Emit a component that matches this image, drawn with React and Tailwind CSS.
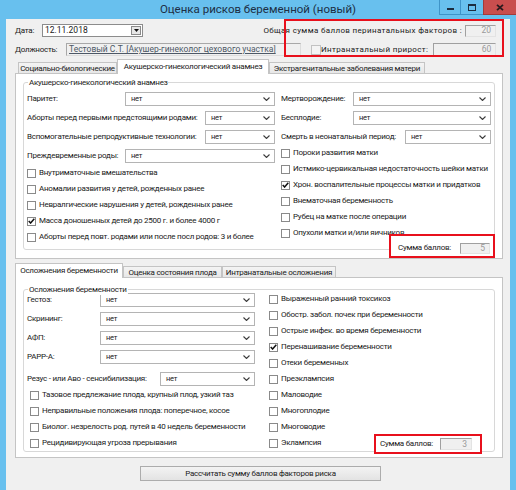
import React from "react";

const Chevron = () => (
  <svg width="7" height="4" viewBox="0 0 7 4" className="shrink-0">
    <path d="M0.5 0.5L3.5 3.5L6.5 0.5" fill="none" stroke="#3c3c3c" strokeWidth="1.1" />
  </svg>
);

function Select({ className = "" }) {
  return (
    <div className={`h-[14px] min-w-0 bg-white border border-[#b4b4b4] flex items-center justify-between pl-[5px] pr-[4px] ${className}`}>
      <span className="text-[7.5px] text-[#222] leading-none">нет</span>
      <Chevron />
    </div>
  );
}

function Check({ checked }) {
  return (
    <span className="w-[9px] h-[9px] border border-[#8a8a8a] bg-white shrink-0 flex items-center justify-center">
      {checked && (
        <svg width="7" height="6" viewBox="0 0 7 6">
          <path d="M0.7 3L2.6 5L6.3 0.7" fill="none" stroke="#111" strokeWidth="1.5" />
        </svg>
      )}
    </span>
  );
}

function CheckRow({ label, checked, pad = "" }) {
  return (
    <div className={`h-[16px] flex items-center gap-[3px] whitespace-nowrap ${pad}`}>
      <Check checked={checked} />
      <span>{label}</span>
    </div>
  );
}

function SelRow({ label, lw, h = "h-[19px]", extra = "" }) {
  return (
    <div className={`${h} flex items-center ${extra}`}>
      <span className={`${lw} shrink-0 whitespace-nowrap`}>{label}</span>
      <Select className="flex-1" />
    </div>
  );
}

function SunkenField({ value, w, h = "h-[12px]" }) {
  return (
    <div className={`${w} ${h} shrink-0 bg-[#f0f0f0] border border-[#a0a0a0] border-r-[#e3e3e3] border-b-[#e3e3e3] flex items-center justify-end pr-[4px] text-[#9a9a9a] text-[8.5px] tracking-normal`}>
      {value}
    </div>
  );
}

function Tab({ label, selected, w }) {
  return selected ? (
    <div className={`${w} h-[15px] shrink-0 bg-white border border-b-0 border-[#c4c4c4] relative z-10 flex items-center justify-center whitespace-nowrap`}>
      {label}
    </div>
  ) : (
    <div className={`${w} h-[12px] shrink-0 bg-gradient-to-b from-[#f4f4f4] to-[#e6e6e6] border border-b-0 border-[#c4c4c4] flex items-center justify-center whitespace-nowrap`}>
      {label}
    </div>
  );
}

function Legend({ children }) {
  return (
    <span className="absolute -top-[5px] left-[4px] bg-white px-[1px] leading-[10px] whitespace-nowrap">
      {children}
    </span>
  );
}

export default function App() {
  return (
    <div className="w-[516px] h-[490px] overflow-hidden bg-[#68c0ee] flex flex-col font-['Roboto',sans-serif] text-[8px] tracking-[-0.25px] leading-none text-[#1a1a1a]">
      {/* title bar */}
      <div className="h-[19px] shrink-0 grid grid-cols-[77px_1fr_77px]">
        <div />
        <div className="flex items-center justify-center text-[11.5px] tracking-normal text-[#1d2f45] pt-[1px]">
          Оценка рисков беременной (новый)
        </div>
        <div className="flex h-[15px] items-stretch">
          <div className="w-[21px] border-l border-b border-[#3f94c8] flex items-end justify-center pb-[4px]">
            <span className="w-[7px] h-[2px] bg-[#1c2d40]" />
          </div>
          <div className="w-[23px] border-l border-b border-[#3f94c8] flex items-center justify-center">
            <span className="w-[8px] h-[7px] border border-t-2 border-[#1c2d40]" />
          </div>
          <div className="w-[33px] bg-[#c94e4e] border-l border-b border-[#a33a3a] flex items-center justify-center">
            <svg width="8" height="7" viewBox="0 0 8 7">
              <path d="M1 0.8L7 6.2M7 0.8L1 6.2" stroke="#2a1a1e" strokeWidth="1.8" />
            </svg>
          </div>
        </div>
      </div>

      {/* content */}
      <div className="flex-1 mx-[6px] bg-[#f0f0f0] flex flex-col">
        {/* top fields */}
        <div className="relative pt-[5px] pl-[9px] pr-[14px]">
          <div className="h-[13px] flex items-center justify-between">
            <div className="flex items-center">
              <span className="w-[27px]">Дата:</span>
              <div className="w-[101px] h-[13px] bg-white border border-[#8c8c8c] flex items-center justify-between pl-[2px] pr-[1px] text-[8.5px] tracking-normal">
                <span>12.11.2018</span>
                <span className="w-[10px] h-[9px] bg-[#e6e6e6] border border-[#8a8a8a] flex items-center justify-center">
                  <svg width="5" height="3" viewBox="0 0 5 3">
                    <path d="M0 0H5L2.5 3Z" fill="#111" />
                  </svg>
                </span>
              </div>
            </div>
            <div className="flex items-center gap-[3px]">
              <span className="tracking-[0.35px] whitespace-nowrap">Общая сумма баллов перинатальных факторов :</span>
              <SunkenField value="20" w="w-[31px]" />
            </div>
          </div>
          <div className="mt-[6px] h-[13px] flex items-center justify-between">
            <div className="flex items-center">
              <span className="w-[51px]">Должность:</span>
              <div className="w-[235px] h-[13px] bg-[#f0f0f0] border border-[#a8a8a8] border-r-[#dcdcdc] border-b-[#dcdcdc] flex items-center pl-[2px] whitespace-nowrap overflow-hidden text-[8.5px] tracking-normal">
                <span className="underline text-[#4d5866]">Тестовый С.Т. [Акушер-гинеколог цехового участка]</span>
              </div>
              <span className="ml-[10px] w-[10px] h-[10px] border border-[#c2c2c2] bg-[#f4f4f4]" />
            </div>
            <div className="flex items-center gap-[5px]">
              <span className="tracking-[0.35px] whitespace-nowrap">Интранатальный прирост:</span>
              <SunkenField value="60" w="w-[63px]" h="h-[13px]" />
            </div>
          </div>
          <div className="absolute left-[278px] top-0 w-[220px] h-[38px] border-2 border-[#e8101c]" />
        </div>

        {/* tab control 1 */}
        <div className="mt-[4px] ml-[9px] w-[488px] flex flex-col">
          <div className="h-[14px] flex items-end pl-[3px]">
            <Tab label="Социально-биологические" w="w-[99px]" />
            <Tab label="Акушерско-гинекологический анамнез" selected w="w-[152px]" />
            <Tab label="Экстрагенитальные заболевания матери" w="w-[156px]" />
          </div>
          <div className="-mt-[1px] h-[186px] bg-white border border-[#c4c4c4] relative pt-[8px] px-[7px]">
            <div className="h-[168px] border border-[#d8d8d8] rounded-[3px] relative pt-[6px] px-[3px]">
              <Legend>Акушерско-гинекологический анамнез</Legend>
              <div className="grid grid-cols-[248px_1fr] gap-x-[6px]">
                <div className="flex flex-col">
                  <SelRow label="Паритет:" lw="w-[98px]" />
                  <SelRow label="Аборты перед первыми предстоящими родами:" lw="w-[178px]" />
                  <SelRow label="Вспомогательные репродуктивные технологии:" lw="w-[178px]" />
                  <SelRow label="Преждевременные роды:" lw="w-[98px]" />
                  <CheckRow label="Внутриматочные вмешательства" />
                  <CheckRow label="Аномалии развития у детей, рожденных ранее" />
                  <CheckRow label="Невралгические нарушения у детей, рожденных ранее" />
                  <CheckRow label="Масса доношенных детей до 2500 г. и более 4000 г" checked />
                  <CheckRow label="Аборты перед повт. родами или после посл родов: 3 и более" />
                </div>
                <div className="flex flex-col">
                  <SelRow label="Мертворождение:" lw="w-[72px]" />
                  <SelRow label="Бесплодие:" lw="w-[72px]" />
                  <SelRow label="Смерть в неонатальный период:" lw="w-[124px]" />
                  <div className="-mt-[1px] flex flex-col">
                    <CheckRow label="Пороки развития матки" />
                    <CheckRow label="Истмико-цервикальная недостаточность шейки матки" />
                    <CheckRow label="Хрон. воспалительные процессы матки и придатков" checked />
                    <CheckRow label="Внематочная беременность" />
                    <CheckRow label="Рубец на матке после операции" />
                    <CheckRow label="Опухоли матки и/или яичников" />
                  </div>
                </div>
              </div>
            </div>
            <div className="absolute left-[373px] top-[160px] w-[106px] h-[24px] border-2 border-[#e8101c] bg-white flex items-center justify-between pl-[7px] pr-[3px] pt-[4px]">
              <span>Сумма баллов:</span>
              <SunkenField value="5" w="w-[30px]" h="h-[11px]" />
            </div>
          </div>
        </div>

        {/* tab control 2 */}
        <div className="mt-[4px] ml-[9px] w-[488px] flex flex-col">
          <div className="h-[15px] flex items-end">
            <Tab label="Осложнения беременности" selected w="w-[108px]" />
            <Tab label="Оценка состояния плода" w="w-[99px]" />
            <Tab label="Интранатальные осложнения" w="w-[114px]" />
          </div>
          <div className="-mt-[1px] h-[181px] bg-white border border-[#c4c4c4] relative pt-[11px] px-[7px]">
            <div className="h-[163px] border border-[#d8d8d8] rounded-[3px] relative px-[3px]">
              <Legend>Осложнения беременности</Legend>
              <div className="grid grid-cols-[228px_1fr] gap-x-[14px]">
                <div className="flex flex-col">
                  <SelRow label="Гестоз:" lw="w-[73px]" />
                  <SelRow label="Скрининг:" lw="w-[73px]" />
                  <SelRow label="АФП:" lw="w-[73px]" />
                  <SelRow label="PAPP-A:" lw="w-[73px]" />
                  <SelRow label="Резус - или Аво - сенсибилизация:" lw="w-[133px]" h="h-[17px]" extra="mt-[4px]" />
                  <CheckRow pad="pl-[3px]" label="Тазовое предлежание плода, крупный плод, узкий таз" />
                  <CheckRow pad="pl-[3px]" label="Неправильные положения плода: поперечное, косое" />
                  <CheckRow pad="pl-[3px]" label="Биолог. незрелость род. путей в 40 недель беременности" />
                  <CheckRow pad="pl-[3px]" label="Рецидивирующая угроза прерывания" />
                </div>
                <div className="flex flex-col pt-[1px]">
                  <CheckRow label="Выраженный ранний токсикоз" />
                  <CheckRow label="Обостр. забол. почек при беременности" />
                  <CheckRow label="Острые инфек. во время беременности" />
                  <CheckRow label="Перенашивание беременности" checked />
                  <CheckRow label="Отеки беременных" />
                  <CheckRow label="Преэклампсия" />
                  <CheckRow label="Маловодие" />
                  <CheckRow label="Многоплодие" />
                  <CheckRow label="Многоводие" />
                  <CheckRow label="Эклампсия" />
                </div>
              </div>
            </div>
            <div className="absolute left-[358px] top-[156px] w-[108px] h-[20px] border-2 border-[#e8101c] bg-white flex items-center justify-between pl-[4px] pr-[8px]">
              <span>Сумма баллов:</span>
              <SunkenField value="3" w="w-[32px]" />
            </div>
          </div>
        </div>

        <div className="mt-[8px] ml-[134px] w-[241px] h-[15px] border border-[#acacac] bg-gradient-to-b from-[#f3f3f3] to-[#e3e3e3] flex items-center justify-center">
          Рассчитать сумму баллов факторов риска
        </div>
      </div>
    </div>
  );
}
